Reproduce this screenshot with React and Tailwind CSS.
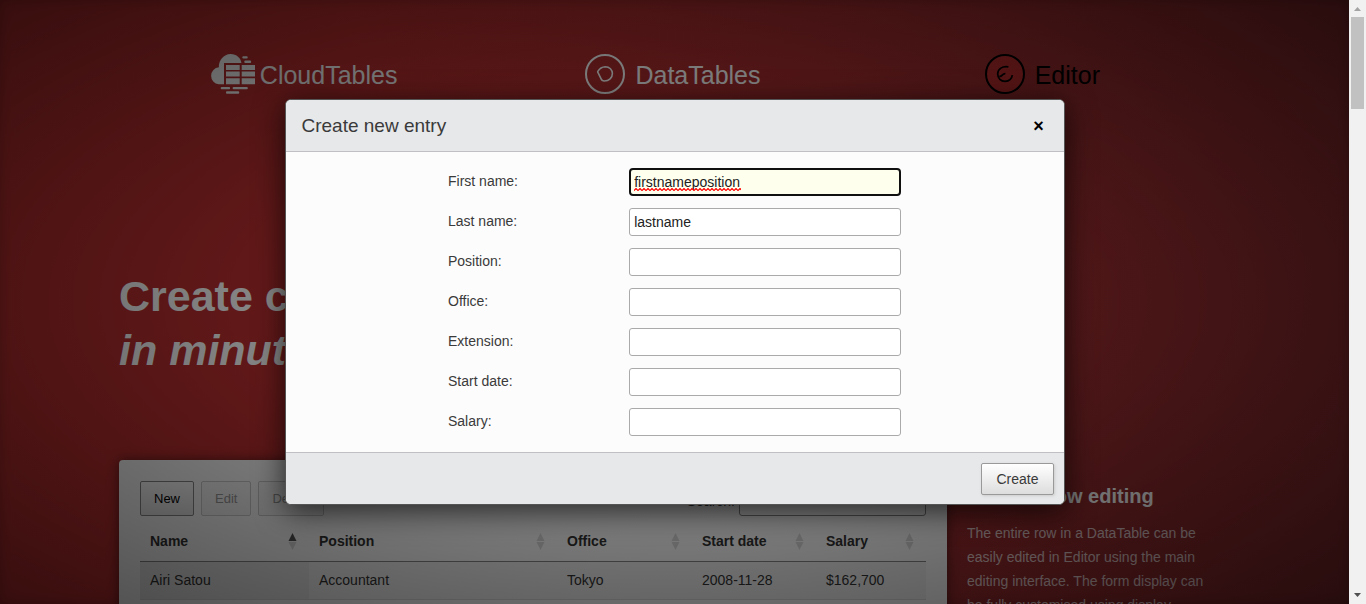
import React from 'react';

const products = [
  { name: 'CloudTables', icon: CloudIcon, tone: 'text-white', gap: 'gap-[5px]' },
  { name: 'DataTables', icon: DataIcon, tone: 'text-white', gap: 'gap-[10px]' },
  { name: 'Editor', icon: EditorIcon, tone: 'text-black', gap: 'gap-[10px]' },
];

const columns = [
  { label: 'Name', width: 'w-[169px]', sorted: true },
  { label: 'Position', width: 'w-[248px]' },
  { label: 'Office', width: 'w-[135px]' },
  { label: 'Start date', width: 'w-[124px]' },
  { label: 'Salary', width: 'w-[110px]' },
];

const rows = [
  ['Airi Satou', 'Accountant', 'Tokyo', '2008-11-28', '$162,700'],
];

const fields = [
  { id: 'first-name', label: 'First name:', value: 'firstnameposition', active: true },
  { id: 'last-name', label: 'Last name:', value: 'lastname' },
  { id: 'position', label: 'Position:', value: '' },
  { id: 'office', label: 'Office:', value: '' },
  { id: 'extension', label: 'Extension:', value: '' },
  { id: 'start-date', label: 'Start date:', value: '' },
  { id: 'salary', label: 'Salary:', value: '' },
];

function CloudIcon() {
  return (
    <svg width="45" height="40" viewBox="0 0 45 40" fill="currentColor" aria-hidden="true">
      <path d="M14 30.3H8.7A8.6 8.6 0 0 1 8.9 13.2 12.2 12.2 0 0 1 20.5 0C26.5 0 31 4.2 31.4 9H14z" />
      <path d="M16 11h13.7v5H16zM31.7 11H45v5H31.7zM16 17.6h13.7v5H16zM31.7 17.6H45v5H31.7zM16 24.3h13.7v6H16zM31.7 24.3H45v6H31.7z" />
      <rect x="32.3" y="2.3" width="5.4" height="2.3" rx="1" />
      <rect x="34.3" y="6.6" width="6.8" height="2.3" rx="1" />
      <rect x="10.7" y="32.9" width="9.4" height="2.3" rx="1" />
      <rect x="22.6" y="32.9" width="15.2" height="2.3" rx="1" />
      <rect x="16" y="37.3" width="13.2" height="2.4" rx="1" />
    </svg>
  );
}

function DataIcon() {
  return (
    <svg width="40" height="40" viewBox="0 0 40 40" fill="none" stroke="currentColor" strokeWidth="2" aria-hidden="true">
      <circle cx="20" cy="20" r="19" />
      <path d="M12.8 17.4C14.5 14.5 17 12.8 20.3 12.7 24.5 12.7 27.4 15.8 27.4 19.5 27.4 23.8 24 27 19.3 27 17.5 27 16.6 26.5 16.1 24.8L12.9 18.4Q12.5 17.9 12.8 17.4Z" strokeWidth="1.6" />
    </svg>
  );
}

function EditorIcon() {
  return (
    <svg width="40" height="40" viewBox="0 0 40 40" fill="none" stroke="currentColor" strokeWidth="2" aria-hidden="true">
      <circle cx="20" cy="20" r="19" fill="#b82c2d" />
      <path d="M23.4 12.9C17.5 11.8 12.7 15 12.7 20 12.7 24.4 16 27.3 20 27.3 24 27.3 26.8 24.8 27.3 21.2M14.3 22.3C17.5 22.8 16.8 19.5 20.4 19.6" strokeWidth="1.7" />
    </svg>
  );
}

function SortIcon({ ascending }) {
  return (
    <svg width="9" height="17" viewBox="0 0 9 17" aria-hidden="true">
      <path d="M4.500 0 8.500 8h-8z" fill={ascending ? '#555' : '#dadada'} />
      <path d="M.5 9h8l-4 8z" fill="#dadada" />
    </svg>
  );
}

function SpellingMark() {
  return (
    <svg className="pointer-events-none absolute bottom-[5px] left-[5px]" width="107" height="3" aria-hidden="true">
      <defs>
        <pattern id="squiggle" width="4" height="3" patternUnits="userSpaceOnUse">
          <path d="M-1 1.500 0 2.500 2 .5 4 2.500 5 1.500" fill="none" stroke="#ff0000" strokeWidth="1.2" />
        </pattern>
      </defs>
      <rect width="107" height="3" fill="url(#squiggle)" />
    </svg>
  );
}

function PageButton({ children, disabled }) {
  return (
    <button
      type="button"
      disabled={disabled}
      className="h-[35px] rounded-[2px] border border-[#888] bg-linear-to-b from-white to-[#e6e6e6] px-[13px] text-[13px] text-black disabled:border-[#ccc] disabled:from-[#f9f9f9] disabled:to-[#f4f4f4] disabled:text-[#999]"
    >
      {children}
    </button>
  );
}

function DataPanel() {
  return (
    <section className="min-w-0 flex-1 rounded-t-[4px] bg-[#fcfcfc] p-[21px] pb-0 shadow-[0_0_12px_rgba(0,0,0,0.5)]">
      <div className="flex items-start justify-between">
        <div className="flex gap-[7px]">
          <PageButton>New</PageButton>
          <PageButton disabled>Edit</PageButton>
          <PageButton disabled>Delete</PageButton>
        </div>
        <div className="flex items-center gap-1 pt-[6px]">
          <label htmlFor="search">Search:</label>
          <input id="search" type="search" className="h-[29px] w-[187px] rounded-[3px] border border-[#888] bg-transparent px-1" />
        </div>
      </div>
      <table className="mt-[5px] w-full table-fixed border-collapse text-left">
        <thead>
          <tr className="h-[40px] border-b border-[#888]">
            {columns.map((column) => (
              <th key={column.label} className={`pt-[2px] pr-3 pl-[10px] font-bold ${column.width}`}>
                <span className="flex items-center justify-between">
                  {column.label}
                  <SortIcon ascending={column.sorted} />
                </span>
              </th>
            ))}
          </tr>
        </thead>
        <tbody>
          {rows.map((row) => (
            <tr key={row[0]} className="h-[38px] border-b border-[#ddd] odd:bg-[#f3f3f3]">
              {row.map((cell, index) => (
                <td key={cell} className={index === 0 ? 'bg-[#e9e9e9] px-[10px]' : 'px-[10px]'}>
                  {cell}
                </td>
              ))}
            </tr>
          ))}
        </tbody>
      </table>
      <div className="h-10" />
    </section>
  );
}

function EntryDialog() {
  return (
    <form
      role="dialog"
      aria-labelledby="dialog-title"
      className="w-full max-w-[780px] overflow-hidden rounded-[6px] border border-[#555] bg-[#fcfcfc] text-[#3a3a3a] shadow-[0_6px_30px_rgba(0,0,0,0.7)]"
      onSubmit={(event) => event.preventDefault()}
    >
      <header className="flex h-[52px] items-center justify-between border-b border-[#c0c0c4] bg-[#e7e8ea] px-4">
        <h2 id="dialog-title" className="pt-[2px] text-[19px]">Create new entry</h2>
        <button type="button" aria-label="Close" className="w-[18px] text-center text-[18px] leading-[18px] font-bold text-black">
          ×
        </button>
      </header>
      <div className="mx-auto flex max-w-[453px] flex-col gap-3 py-4">
        {fields.map((field) => (
          <div key={field.id} className="grid grid-cols-[2fr_3fr] items-start">
            <label htmlFor={field.id} className="leading-[26px]">{field.label}</label>
            <div className="relative">
              <input
                id={field.id}
                type="text"
                spellCheck={false}
                defaultValue={field.value}
                className={
                  field.active
                    ? 'block h-7 w-full rounded-[4px] border-2 border-[#101010] bg-[#ffffee] px-[3px] text-[#222]'
                    : 'block h-7 w-full rounded-[3px] border border-[#aaa] bg-white px-1 text-[#222]'
                }
              />
              {field.active && <SpellingMark />}
            </div>
          </div>
        ))}
      </div>
      <footer className="flex justify-end border-t border-[#c0c0c4] bg-[#e7e8ea] px-[10px] pt-[10px] pb-[9px]">
        <button
          type="submit"
          className="h-8 rounded-[2px] border border-[#999] bg-linear-to-b from-white to-[#ddd] px-[14px] shadow-[1px_1px_3px_#ccc]"
        >
          Create
        </button>
      </footer>
    </form>
  );
}

function ScrollTrack() {
  return (
    <div className="flex w-[17px] shrink-0 flex-col items-center justify-between bg-[#f1f1f1]" aria-hidden="true">
      <div className="flex flex-col items-center">
        <svg width="17" height="17" viewBox="0 0 17 17"><path d="M5 11h7L8.500 7z" fill="#a3a3a3" /></svg>
        <div className="h-[92px] w-[13px] bg-[#c1c1c1]" />
      </div>
      <svg width="17" height="17" viewBox="0 0 17 17"><path d="M5 6h7l-3.500 4z" fill="#505050" /></svg>
    </div>
  );
}

export default function App() {
  return (
    <div className="flex h-screen overflow-hidden font-['Liberation_Sans',Arial,sans-serif] text-[14px] text-[#333]">
      <div className="relative min-w-0 flex-1 overflow-hidden bg-[linear-gradient(100deg,#bb2e2f_0%,#bb2e2f_25%,#8f2a2d_85%,#852a2e_100%)] shadow-[inset_0_0_12px_rgba(0,0,0,0.2)]">
        <main className="mx-auto max-w-[1111px] pt-[54px]">
          <nav className="grid grid-cols-3 pr-[3px]">
            {products.map(({ name, icon: Icon, tone, gap }) => (
              <a key={name} href={`#${name}`} className={`flex h-10 items-center justify-center ${gap} ${tone}`}>
                <Icon />
                <span className="pt-1 text-[25px]">{name}</span>
              </a>
            ))}
          </nav>
          <h1 className="mt-[175px] text-[43px] leading-[54px] font-bold text-white">
            Create custom forms
            <br />
            <em>in minutes</em>
          </h1>
          <div className="mt-[83px] flex gap-5">
            <DataPanel />
            <aside className="w-[263px] pt-6 pr-3 text-white">
              <h3 className="text-[20px] leading-6 font-bold">Custom row editing</h3>
              <p className="mt-[13px] leading-6 text-white/75">
                The entire row in a DataTable can be easily edited in Editor using the main editing interface. The form
                display can be fully customised using display
              </p>
            </aside>
          </div>
        </main>
        <div className="absolute inset-0 flex items-center justify-center bg-[radial-gradient(ellipse_farthest-corner_at_center,rgba(0,0,0,0.3)_0%,rgba(0,0,0,0.7)_100%)]">
          <EntryDialog />
        </div>
      </div>
      <ScrollTrack />
    </div>
  );
}
